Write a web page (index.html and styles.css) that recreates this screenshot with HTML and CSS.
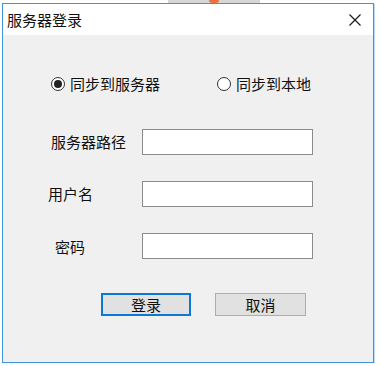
FILE: index.html
```html
<!DOCTYPE html>
<html lang="zh-CN">
<head>
<meta charset="utf-8">
<title>服务器登录</title>
<link rel="stylesheet" href="styles.css">
</head>
<body>
<div class="strip"><div class="strip-block"><span class="strip-dot"></span></div></div>
<div class="window">
  <div class="titlebar">
    <span class="title">服务器登录</span>
    <svg class="close" width="12" height="12" viewBox="0 0 12 12"><path d="M0.5 0.5 L11.5 11.5 M11.5 0.5 L0.5 11.5" stroke="#1a1a1a" stroke-width="1.2" fill="none"/></svg>
  </div>
  <div class="content">
    <div class="radios">
      <label class="radio radio-first"><span class="dot checked"></span><span>同步到服务器</span></label>
      <label class="radio"><span class="dot"></span><span>同步到本地</span></label>
    </div>
    <div class="form">
      <span class="lbl lbl-path">服务器路径</span><span class="input"></span>
      <span class="lbl lbl-user">用户名</span><span class="input"></span>
      <span class="lbl lbl-pass">密码</span><span class="input"></span>
    </div>
    <div class="buttons">
      <span class="btn btn-default">登录</span>
      <span class="btn">取消</span>
    </div>
  </div>
</div>
</body>
</html>
```
FILE: styles.css
```css
html, body {
  margin: 0;
  padding: 0;
  background: #ffffff;
}
body {
  font-family: "Noto Sans CJK SC", "Noto Sans", sans-serif;
  color: #111;
  font-size: 15px;
}
.strip {
  height: 3px;
  display: flex;
}
.strip-block {
  margin-left: 168px;
  width: 92px;
  height: 3px;
  background: #d6d6d6;
  display: flex;
  justify-content: center;
}
.strip-dot {
  width: 10px;
  height: 3px;
  border-radius: 0 0 5px 5px;
  background: #e8743b;
}
.window {
  margin-left: 2px;
  width: 372px;
  height: 360px;
  box-sizing: border-box;
  border: 1px solid #3f94dc;
  display: flex;
  flex-direction: column;
  box-shadow: 1px 1px 0 #b9d9f3;
}
.titlebar {
  height: 31px;
  background: #ffffff;
  display: flex;
  align-items: center;
  justify-content: space-between;
  padding: 0 12px 0 4px;
  flex: none;
}
.title {
  font-size: 15px;
  line-height: 20px;
}
.close {
  display: block;
}
.content {
  flex: 1;
  background: #f0f0f0;
  padding-left: 45px;
  display: flex;
  flex-direction: column;
}
.radios {
  margin-top: 39px;
  height: 20px;
  display: flex;
  align-items: center;
  padding-left: 3px;
}
.radio {
  display: flex;
  align-items: center;
  gap: 5px;
  line-height: 20px;
}
.radio-first {
  width: 166px;
}
.dot {
  width: 14px;
  height: 14px;
  box-sizing: border-box;
  border: 1px solid #333;
  border-radius: 50%;
  background: #fff;
  display: flex;
  align-items: center;
  justify-content: center;
}
.dot.checked::after {
  content: "";
  width: 8px;
  height: 8px;
  border-radius: 50%;
  background: #222;
}
.form {
  margin-top: 35px;
  display: grid;
  grid-template-columns: 94px 171px;
  grid-auto-rows: 26px;
  row-gap: 26px;
  align-items: center;
}
.lbl {
  line-height: 20px;
}
.lbl-path { margin-left: 3px; }
.lbl-user { margin-left: 0; }
.lbl-pass { margin-left: 7px; margin-top: 2px; }
.input {
  height: 26px;
  box-sizing: border-box;
  border: 1px solid #8c8c8c;
  background: #ffffff;
}
.buttons {
  margin-top: 34px;
  margin-left: 53px;
  display: flex;
  gap: 24px;
}
.btn {
  width: 91px;
  height: 23px;
  box-sizing: border-box;
  border: 1px solid #adadad;
  background: #e1e1e1;
  display: flex;
  align-items: center;
  justify-content: center;
  line-height: 20px;
}
.btn-default {
  width: 90px;
  border: 2px solid #0a78d4;
}
```
